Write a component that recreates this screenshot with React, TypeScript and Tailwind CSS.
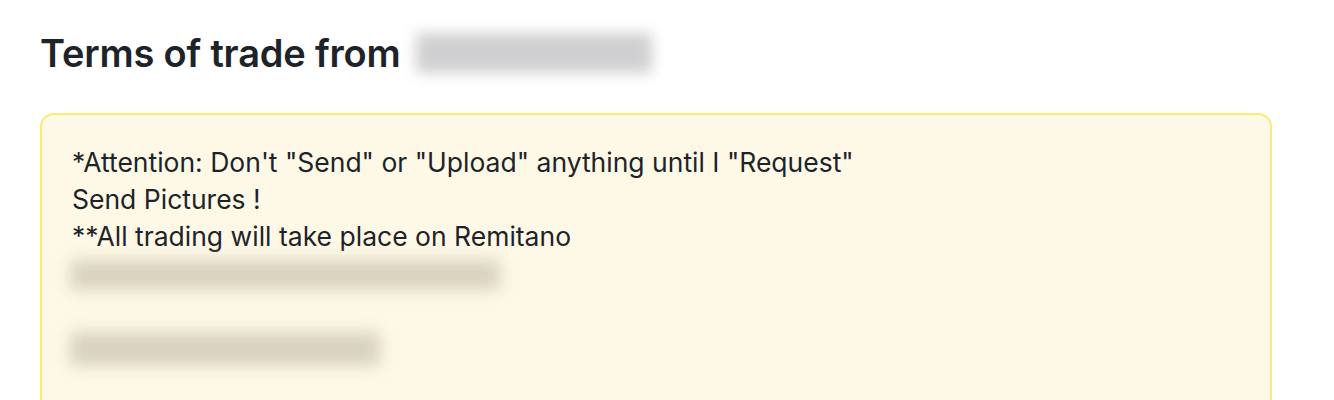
import React from "react";

export default function App() {
  return (
    <div className="min-h-screen bg-white pl-[40px] pr-[62px] pt-[25px]" style={{ fontFamily: "Inter, 'Noto Sans', sans-serif" }}>
      <div className="flex items-center h-[56px]">
        <h1 className="text-[38px] font-semibold text-[#1e2329] tracking-[-0.2px] leading-[56px]">Terms of trade from</h1>
        <div className="ml-[16px] h-[40px] w-[236px] bg-[#c4c4c6] blur-[7px] opacity-80" />
      </div>
      <div className="mt-[32px] rounded-[14px] border-2 border-[#fce97a] bg-[#fef9e7] px-[30px] pt-[29px] pb-[60px] h-[320px]">
        <div className="text-[26.5px] leading-[37px] text-[#1e2329]">
          <p>*Attention: Don't "Send" or "Upload" anything until I "Request"</p>
          <p>Send Pictures !</p>
          <p>**All trading will take place on Remitano</p>
        </div>
        <div className="mt-[5px] -ml-[2px] h-[30px] w-[430px] bg-[#d8d2bf] blur-[8px]" />
        <div className="mt-[42px] -ml-[2px] h-[34px] w-[310px] bg-[#d8d2bf] blur-[8px]" />
      </div>
    </div>
  );
}
